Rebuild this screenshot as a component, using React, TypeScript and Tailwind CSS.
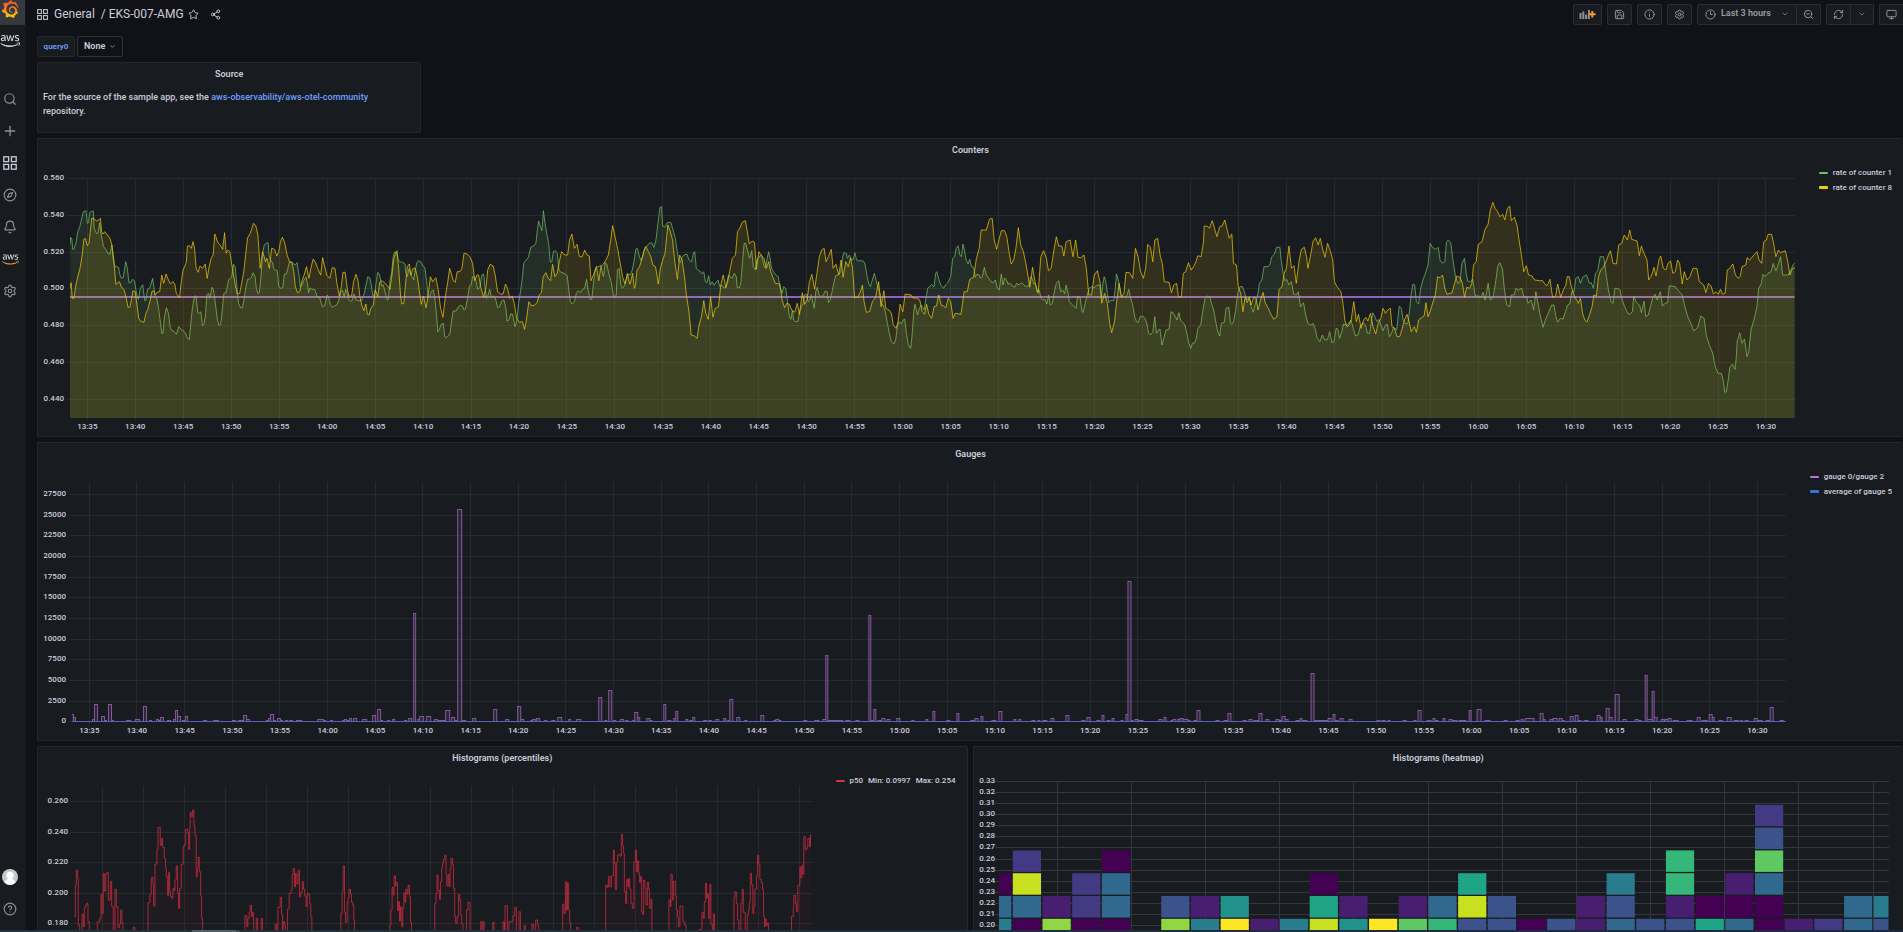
import type { ReactNode } from "react";
import {
  Bell,
  ChevronDown,
  CircleHelp,
  Clock3,
  Compass,
  Info,
  Monitor,
  Plus,
  RefreshCw,
  Save,
  Search,
  Settings,
  Share2,
  Star,
  ZoomOut,
} from "lucide-react";
import { FaAws } from "react-icons/fa";
import { SiGrafana } from "react-icons/si";

/* ---------- data ---------- */

// A recorded stretch of a series: x runs `density` samples per unit from `start`, y is in thirds of a unit.
type Chunk = { start: number; density: number; samples: string };

const PLOT_HEIGHT = 240;

const counter1: Chunk[] = [
  {
    start: -40,
    density: 2.529,
    samples:
      "101,255 103,232 106,238 108,268 111,268 116,250 121,215 126,200 130,180 135,155 142,152 145,190 148,188 151,157 156,154 160,153 162,205 168,220 172,220 176,188 180,225 186,260 192,268 197,280 202,283 207,255 210,295 215,320 224,322 226,340 231,355 236,352 242,305 246,325 250,368 255,368 259,358 264,362 270,405 274,418 279,385 285,374 290,422 293,422 297,388 302,386 306,372 310,355 313,380 317,412 321,418 325,445 330,490 333,520 336,520 340,470 345,443 350,460 354,500 358,512 364,514 370,523 376,500 382,508 388,512 394,522 398,535 403,538 407,485 411,440 416,408 420,408 424,458 428,460 432,455 436,497 440,493 444,460 447,405 451,400 455,415 460,382 464,390 468,425 474,480 478,497 482,493 486,450 490,400 496,398 502,360 506,355 510,350 515,313 519,322 523,378 527,430 532,443 537,443 541,420 546,380 550,358 556,357 560,352 564,338 569,350 572,385 576,400 580,398 584,350 588,280 592,255 597,250 602,248 605,290 608,300 613,308 616,325 620,330 625,332 629,380 634,385 639,383 643,342 648,342 652,325 656,305 662,307 667,312 671,315 675,308 680,345 683,380 688,376 692,362 698,352 702,375 704,398 708,384 713,388 719,388 723,398 726,412 732,410 735,425 740,440 745,437 751,405 755,415 760,435 764,442 770,438 776,434 781,420 786,395 790,390 794,412 798,388 802,402 806,418 810,424 814,422 819,402 824,420 830,422 838,422 845,400 849,378 854,350 859,354 863,375 867,410 871,402 875,368 879,337 884,345 889,378 893,375 899,402 903,420 906,418 910,360 914,340 918,290 922,275 927,280 931,300 936,305 942,307 948,312 950,338 954,350 958,326 963,345 970,360 974,330 978,308 982,302 988,305 993,318 998,322 1003,365 1006,410 1010,412 1014,395 1019,390 1023,410 1027,455 1031,515 1035,508 1040,492 1045,490 1048,530 1052,533 1058,527 1062,518 1066,480 1070,453 1077,453 1083,440 1088,436 1093,438 1097,450 1101,447 1107,410 1111,378 1115,375 1119,350 1124,350 1128,365 1132,388 1137,382 1142,345 1147,342 1150,380 1154,415 1158,405 1162,388 1166,412 1171,408 1176,412 1182,443 1187,440 1192,424 1198,420 1203,445 1206,483 1211,480 1215,462 1220,463 1226,500 1231,480 1235,430 1240,395 1245,350 1248,310 1253,302 1260,292 1266,262 1273,258 1279,250 1283,205 1286,183 1290,200 1294,212 1298,152 1302,190 1307,225 1311,250 1315,306 1319,305 1323,275 1328,272 1333,280 1337,330 1342,337 1350,340 1358,347 1362,390 1366,425 1370,432 1376,425 1381,400 1386,392 1391,398 1397,388 1402,385 1407,358 1411,390 1416,418 1420,418 1424,375 1428,330 1432,320 1438,320 1443,315 1448,345 1450,350 1454,308 1458,312 1463,340 1469,365 1474,400 1478,412 1482,405 1485,330 1489,325 1494,375 1498,385 1504,375 1509,350 1513,342",
  },
  {
    start: 560,
    density: 2.529,
    samples:
      "0,345 5,330 10,300 14,268 18,265 22,285 27,302 32,285 37,262 42,258 48,250 54,248 60,262 65,240 70,190 75,142 79,140 82,198 88,202 92,190 97,187 103,188 108,210 114,235 118,270 123,305 127,308 131,292 136,285 143,282 149,300 155,306 160,278 163,275 167,325 171,330 176,333 181,342 186,335 190,365 194,368 198,347 202,375 207,365 212,376 218,365 222,360 226,380 232,375 238,385 243,375 248,345 253,352 258,354 263,340 268,350 270,382 276,384 280,365 284,300 288,250 292,250 296,270 302,295 307,272 311,320 316,330 320,300 326,290 332,285 338,318 342,325 346,295 350,275 354,300 357,325 362,335 368,345 374,350 378,378 384,400 388,380 393,385 397,420 402,470 406,478 410,450 413,480 418,485 424,484 428,455 433,440 437,430 441,405 446,403 450,425 454,420 458,404 462,430 465,445 469,395 473,382 477,405 482,410 488,405 493,393 498,395 501,428 505,422 510,395 515,368 519,347 526,345 532,335 537,290 540,278 546,280 549,295 554,285 558,298 563,300 568,278 572,300 578,303 584,302 590,304 594,315 598,345 603,372 607,380 612,360 617,340 622,362 627,385 631,398 635,430 639,435 645,455 650,490 655,520 660,545 666,552 671,540 675,500 680,485 685,492 690,480 694,477 698,520 703,555 709,565 713,520 717,450 720,433 726,465 731,445 736,435 743,450 748,410 752,385 758,378 762,374 768,380 772,340 775,335 780,358 785,375 792,385 797,375 803,368 810,350 815,295 820,290 824,265 829,257 833,285 837,290 841,252 845,270 849,300 854,312 858,298 863,320 868,322 872,352 876,343 882,345 886,355 890,350 895,322 900,345 906,355 912,365 918,368 923,360 928,385 933,390 938,342 942,375 946,355 950,357 955,372 960,370 966,378 972,382 977,370 983,375 989,368 995,375 1001,380 1007,378 1012,350 1016,355 1020,372 1024,370 1028,395 1034,390 1038,415 1043,420 1048,418 1053,432 1058,405 1062,435 1067,430 1072,395 1077,370 1083,362 1088,395 1093,390 1098,402 1102,375 1107,400 1110,425 1115,432 1121,438 1127,445 1131,408 1137,412 1142,455 1145,457 1150,430 1154,410 1160,385 1166,380 1172,384 1177,378 1182,375 1187,375 1191,415 1195,370 1198,350 1202,365 1206,400 1210,428 1215,420 1222,422 1226,385 1229,342 1234,360 1240,405 1246,410 1252,412 1256,405 1260,388 1265,415 1270,435 1275,470 1280,485 1284,488 1289,470 1295,468 1301,475 1306,490 1310,520 1316,524 1321,515 1326,470 1330,520 1335,510 1339,507 1344,555 1349,535 1354,510 1362,508 1367,455 1372,458 1377,468 1382,480 1387,458 1391,480 1397,488 1402,495 1407,520 1412,550 1417,565 1421,550 1427,548 1431,535 1435,505 1442,495 1447,455 1453,415 1458,408 1465,410 1469,430 1475,450 1480,485 1485,515 1490,528 1494,490 1502,487 1506,445 1513,442",
  },
  {
    start: 1160,
    density: 2.33,
    samples:
      "0,490 3,493 7,485 12,450 17,400 22,380 28,380 33,400 38,420 43,410 48,440 53,457 58,430 64,400 67,370 73,360 78,320 88,320 92,312 96,290 102,283 107,262 115,262 118,300 123,345 127,362 131,358 136,375 142,365 147,402 153,405 158,395 163,440 170,428 175,465 180,490 187,496 192,490 197,505 202,535 208,545 214,525 220,540 226,538 231,515 236,548 241,545 246,505 250,508 254,535 259,515 263,492 270,495 276,488 280,480 285,500 291,528 297,525 302,500 308,488 314,495 319,520 324,520 328,485 331,458 336,470 341,485 346,478 350,495 355,512 360,497 365,493 370,530 375,520 380,502 387,510 393,438 398,445 402,480 408,492 413,490 417,450 421,400 425,372 429,375 433,425 438,432 443,385 448,360 454,340 460,315 465,250 470,262 478,268 484,262 488,300 493,310 499,305 503,245 507,240 513,248 518,300 524,350 529,370 534,368 539,310 545,295 549,340 553,365 559,365 564,358 570,408 577,408 584,410 588,397 593,420 600,370 605,420 611,415 617,370 622,320 627,308 633,325 638,390 643,435 650,440 654,405 660,405 665,385 670,390 678,385 683,410 690,410 693,430 700,420 706,450 711,395 716,430 721,465 728,502 733,480 740,460 748,435 753,435 758,470 762,487 768,475 774,478 780,455 785,435 790,432 795,395 800,395 804,355 810,350 815,370 820,352 829,345 836,370 840,368 845,385 850,340 855,332 861,290 869,290 875,345 880,390 886,425 891,430 895,385 900,385 907,390 912,420 918,440 925,460 930,463 936,455 939,408 944,425 948,430 953,437 957,458 963,424 967,470 973,465 978,440 984,410 989,403 994,420 1001,395 1006,438 1012,430 1018,428 1022,377 1036,380 1043,392 1052,405 1058,440 1065,470 1072,490 1079,513 1088,502 1095,468 1103,475 1108,525 1115,555 1123,580 1129,620 1135,640 1143,640 1148,665 1151,697 1155,695 1160,650 1163,622 1169,612 1175,628 1178,590 1180,545 1186,518 1191,550 1197,537 1203,590 1207,575 1212,510 1220,475 1226,440 1230,385 1236,372 1240,343 1245,350 1252,340 1259,335 1264,310 1270,333 1276,312 1281,290 1286,345 1299,345 1305,330 1310,315 1315,308",
  },
];

const counter8: Chunk[] = [
  {
    start: -40,
    density: 2.529,
    samples:
      "101,385 104,368 107,415 111,415 116,375 121,350 127,322 132,285 136,238 140,235 145,257 149,250 153,210 156,175 163,177 168,183 174,180 178,175 181,215 184,222 189,215 196,225 202,235 207,255 212,300 215,345 217,373 226,365 231,380 238,390 243,412 248,443 253,440 257,415 260,393 266,395 271,440 275,475 280,484 288,487 293,460 298,448 303,425 308,395 312,392 317,405 321,397 328,395 333,345 338,370 344,342 350,360 355,372 361,365 366,372 370,400 378,413 382,370 387,330 395,308 398,258 403,257 408,265 412,245 416,265 420,325 425,337 430,318 436,325 443,312 448,355 453,320 458,295 463,285 467,222 470,230 475,248 481,255 487,268 492,218 496,280 501,270 505,275 509,305 514,340 519,375 524,402 530,400 536,365 541,330 546,275 550,233 556,222 561,205 565,190 571,198 576,225 580,290 582,325 588,275 592,290 595,305 599,295 605,325 611,265 618,268 624,288 629,275 633,245 638,232 644,248 650,285 656,305 662,307 667,335 671,380 676,398 682,395 687,365 693,345 699,320 705,355 711,320 716,297 722,308 727,325 735,345 740,293 744,315 750,345 758,355 764,323 771,325 776,370 782,408 787,380 791,337 797,337 802,385 806,408 813,408 818,365 824,343 829,360 834,410 840,440 844,452 849,432 853,463 857,465 862,445 868,435 873,390 879,410 884,367 890,362 898,370 904,378 910,388 914,355 920,295 924,280 928,272 932,325 937,410 940,432 945,430 950,365 954,320 959,312 963,345 968,325 974,325 980,355 986,410 989,433 995,408 1001,443 1006,410 1012,350 1018,365 1026,353 1032,390 1038,445 1044,472 1050,410 1056,365 1061,325 1066,345 1070,362 1075,367 1080,335 1087,335 1092,325 1097,280 1105,282 1112,290 1119,310 1124,362 1130,345 1134,345 1140,385 1147,412 1153,380 1157,330 1163,313 1171,318 1176,345 1182,395 1190,402 1196,402 1202,372 1207,385 1213,415 1219,408 1224,430 1230,475 1237,487 1245,485 1250,508 1255,480 1261,425 1268,438 1276,435 1282,428 1287,405 1293,398 1297,350 1304,338 1310,355 1316,362 1321,313 1327,350 1333,340 1338,305 1344,275 1352,285 1359,285 1364,240 1370,222 1376,265 1383,253 1389,290 1396,290 1402,270 1408,285 1414,288 1418,362 1426,340 1432,320 1438,362 1443,320 1450,312 1456,300 1462,285 1468,240 1473,197 1480,235 1486,270 1492,310 1498,350 1504,372 1510,340 1516,372",
  },
  {
    start: 560,
    density: 2.529,
    samples:
      "0,372 6,340 10,385 13,380 17,332 23,320 29,300 34,275 40,260 46,275 52,290 57,315 64,320 71,372 76,325 82,300 88,280 92,230 95,195 100,210 107,240 113,310 119,358 125,285 131,300 137,350 142,405 148,450 154,525 162,528 169,535 174,495 180,470 186,422 191,460 197,478 203,410 209,472 215,445 223,440 229,375 235,345 242,383 247,360 253,325 258,295 266,285 271,215 277,205 283,187 291,182 296,215 301,252 308,243 314,247 319,328 325,275 332,287 338,295 344,325 350,305 355,335 361,353 367,370 378,372 384,420 390,443 396,430 402,433 408,450 416,457 422,430 428,463 435,398 441,433 447,420 453,365 459,343 466,388 472,340 478,290 484,270 490,265 495,305 501,290 508,268 513,325 520,313 527,345 533,300 538,352 545,305 551,320 557,293 562,325 567,413 575,412 582,395 587,375 591,425 597,457 605,455 612,425 620,412 628,365 634,440 641,392 646,445 654,450 660,460 665,495 672,505 677,485 682,433 689,455 695,402 710,405 716,415 722,413 732,420 738,455 744,463 749,433 755,463 762,475 768,440 774,438 780,405 786,435 792,438 798,443 804,415 810,425 816,475 822,460 836,463 844,395 852,395 858,358 868,352 875,295 882,265 887,210 900,210 908,178 915,175 920,240 926,268 932,240 938,212 946,212 952,230 958,280 963,312 969,300 975,265 981,203 987,255 994,275 1000,310 1005,345 1010,382 1017,322 1024,370 1031,400 1038,290 1045,272 1052,295 1057,332 1064,325 1071,270 1077,230 1083,258 1091,258 1096,288 1102,245 1112,240 1119,290 1126,240 1132,292 1139,293 1147,285 1153,325 1159,405 1166,405 1173,345 1181,332 1188,370 1192,430 1199,400 1206,430 1212,490 1217,518 1224,485 1230,420 1236,370 1242,412 1248,400 1253,337 1262,338 1270,355 1277,265 1284,290 1290,335 1297,355 1303,325 1308,253 1315,262 1321,305 1326,240 1333,235 1340,290 1345,310 1350,365 1362,367 1368,398 1374,375 1381,370 1386,412 1393,410 1398,340 1404,335 1411,308 1418,330 1424,320 1430,305 1435,287 1443,290 1449,245 1451,198 1458,198 1464,205 1471,182 1477,205 1483,230 1490,200 1496,198 1503,180 1508,205 1514,235",
  },
  {
    start: 1160,
    density: 2.33,
    samples:
      "3,222 7,310 14,315 18,380 24,400 29,455 34,410 39,428 44,412 48,435 54,412 59,415 64,450 70,420 76,397 81,430 88,445 93,460 101,478 108,470 113,388 120,380 125,340 130,325 136,258 142,325 148,317 153,370 160,300 165,268 172,262 177,290 180,325 186,290 192,245 198,233 204,255 209,235 215,270 220,292 226,250 233,275 238,300 242,365 248,380 257,395 262,430 266,480 271,500 276,495 281,480 287,425 293,485 298,463 304,505 310,480 315,472 320,483 326,460 332,500 338,522 344,490 350,475 355,445 361,460 366,450 372,445 376,500 382,505 388,530 394,530 399,510 405,480 411,463 416,485 421,515 428,500 433,517 438,480 446,472 451,467 455,428 460,470 466,450 473,420 477,405 482,350 488,353 494,345 499,385 504,403 516,398 522,370 527,348 535,353 540,370 545,412 550,382 557,385 562,370 566,315 572,305 577,253 586,245 592,210 600,192 605,150 611,127 616,145 622,155 627,170 634,163 639,180 645,145 650,138 654,182 661,172 667,195 672,240 678,290 683,335 689,317 694,345 702,348 708,360 720,362 727,362 731,370 736,378 740,370 744,358 750,412 757,408 762,372 769,412 775,390 781,375 784,350 789,350 794,382 800,405 810,430 815,415 820,460 825,480 830,487 836,465 842,440 846,405 852,408 857,350 862,330 868,323 876,300 880,285 885,272 891,310 899,312 904,255 911,250 917,225 924,240 930,210 934,238 947,243 952,287 957,258 963,280 970,300 974,360 981,345 986,322 991,348 998,298 1002,288 1008,325 1014,330 1019,310 1025,303 1030,340 1036,335 1041,300 1046,310 1052,372 1057,335 1063,360 1070,350 1077,325 1086,325 1092,365 1102,375 1107,398 1113,370 1119,378 1125,402 1131,395 1136,403 1141,388 1146,403 1152,400 1157,330 1163,325 1170,312 1176,345 1182,355 1187,350 1191,320 1200,315 1203,293 1209,300 1217,288 1226,275 1231,300 1237,310 1242,245 1248,240 1252,223 1260,223 1265,250 1270,290 1276,270 1281,278 1292,272 1297,300 1303,345 1309,325 1315,323",
  },
];

// Each entry is "from-to:level"; everything between entries rests on the floor.
const gaugeRatio: Chunk[] = [
  {
    start: -42,
    density: 2.529,
    samples:
      "106-111:823 111-115:832 157-162:838 162-171:792 180-189:829 189-194:840 198-206:792 206-211:841 245-254:841 266-277:838 288-295:798 301-308:841 319-325:838 325-331:841 331-338:832 349-356:841 362-367:838 367-373:811 373-380:829 385-391:840 392-399:829 440-447:840 463-477:841 512-520:841 528-537:841 541-548:826 548-555:838 597-602:841 602-607:835 607-616:823 616-621:840 625-634:835 634-639:841 645-651:841 656-663:841 673-686:841 728-743:838 743-748:841 759-765:841 790-795:841 795-801:838 801-807:840 807-813:835 819-826:835 842-850:838 866-874:826 878-886:808 886-891:841 903-909:841 916-922:838 946-952:841 956-965:835 969-975:520 981-986:838 986-995:829 1004-1013:829 1024-1031:838 1034-1042:841 1046-1052:841 1052-1061:811 1065-1073:832 1073-1082:840 1082-1092:208 1092-1101:841 1120-1127:835 1173-1180:808 1203-1210:838 1234-1241:799 1241-1247:838 1265-1270:841 1270-1278:838 1282-1289:835 1300-1306:841 1318-1327:841 1335-1344:832 1361-1367:838 1383-1391:838 1439-1446:772 1452-1458:841 1462-1471:751 1475-1480:841 1493-1501:838 1505-1511:841 1523-1530:841 1530-1536:817 1536-1542:832",
  },
  {
    start: 568,
    density: 2.6133,
    samples:
      "16-25:835 25-30:841 61-67:793 73-80:841 87-92:835 92-98:814 118-125:838 129-136:841 136-143:832 167-174:841 179-186:841 196-205:838 217-224:835 228-235:841 235-242:778 253-260:832 272-279:841 316-323:826 348-353:841 353-361:838 361-367:841 428-435:841 457-466:841 478-484:838 484-490:646 490-497:841 501-516:841 520-530:841 538-547:841 564-571:841 597-603:526 603-609:841 609-616:808 620-629:841 632-639:835 645-652:838 670-678:835 709-715:841 746-752:838 764-770:814 800-809:841 826-833:820 863-875:841 875-882:835 889-896:829 919-928:841 938-945:814 976-982:838 988-995:838 1024-1031:841 1038-1044:841 1052-1062:841 1074-1081:835 1111-1120:826 1154-1162:841 1168-1175:832 1193-1200:841 1205-1212:826 1218-1226:841 1231-1238:835 1256-1262:841 1268-1274:823 1274-1282:424 1282-1287:841 1292-1299:838 1299-1313:841 1355-1363:838 1367-1374:832 1386-1392:841 1392-1400:838 1404-1411:838 1411-1418:835 1418-1430:838 1430-1435:841 1447-1453:841 1453-1462:811 1504-1512:841 1525-1532:841 1535-1543:820",
  },
  {
    start: 1158,
    density: 2.33,
    samples:
      "28-35:841 43-50:838 54-63:841 66-74:820 82-89:838 105-112:838 112-117:841 121-127:829 127-133:838 153-161:841 161-167:835 170-178:841 188-195:700 198-224:841 227-235:835 238-244:823 244-250:841 254-262:835 276-283:838 341-349:841 354-360:841 366-372:841 403-410:841 427-432:841 438-444:811 459-466:841 471-477:835 477-484:841 494-500:835 510-516:838 516-528:841 532-549:841 555-560:811 575-584:808 593-605:841 637-644:841 665-672:841 676-682:838 687-706:835 720-728:820 728-733:838 744-752:838 752-761:835 765-773:835 773-778:841 792-799:829 803-810:826 810-816:841 824-832:841 853-860:826 860-866:832 876-882:805 882-889:832 897-905:763 914-921:838 942-949:838 949-956:841 965-971:706 971-981:838 981-987:754 987-994:832 1003-1010:838 1013-1020:838 1020-1026:835 1030-1043:841 1064-1075:841 1086-1094:832 1098-1110:841 1114-1122:823 1122-1127:832 1138-1145:841 1158-1166:832 1174-1182:841 1186-1192:841 1198-1205:841 1219-1226:835 1230-1238:841 1247-1256:841 1257-1264:802 1280-1287:841",
  },
];

const p50: Chunk[] = [
  {
    start: -74,
    density: 3,
    samples:
      "223,530 226,436 229,391 233,415 235,555 239,590 246,522 250,560 253,502 257,495 260,490 264,545 268,590 292,545 299,535 303,463 306,520 310,400 313,453 317,403 321,397 325,480 331,424 335,500 340,590 345,448 349,500 354,563 358,553 362,510 366,548 369,590 400,562 405,590 444,488 450,464 454,412 459,435 461,498 465,372 471,328 474,262 481,316 485,295 488,322 493,355 497,385 499,410 503,466 506,397 509,455 512,470 516,475 519,445 522,452 525,420 529,378 533,460 536,505 539,445 544,373 550,318 555,310 557,268 563,278 566,328 569,262 571,217 574,230 578,210 582,258 585,285 589,410 592,385 595,351 598,395 602,468 605,535 608,590 735,527 741,560 744,535 748,517 751,496 755,530 758,517 761,590 769,535 773,590 784,535 788,590 826,553 830,590 834,502 839,502 841,472 845,522 848,590 850,545 855,558 857,590 863,507 868,460 874,448 877,403 880,385 884,440 887,400 891,432 895,391 899,470 903,458 907,425 911,448 915,468 919,500 922,460 927,465 930,492 933,532 936,590 1023,520 1027,455 1030,378 1034,517 1037,547 1042,487 1045,472 1048,448 1052,462 1055,487 1059,495 1062,540 1064,590 1170,555 1173,510 1177,442 1180,465 1183,408 1187,438 1189,427 1193,512 1196,485 1199,543 1202,500 1206,560 1209,505 1212,460 1216,487 1218,448 1222,462 1225,436 1229,470 1232,547 1235,590 1303,570 1305,490 1309,460 1312,405 1315,450 1319,478 1322,425 1326,385 1328,370 1331,358 1335,346 1339,403 1341,437 1345,403 1348,440 1351,385 1354,355 1358,373 1361,445 1365,530 1368,550 1372,530 1376,463 1380,480 1383,525 1386,552 1390,590 1400,510 1405,487 1411,590",
  },
  {
    start: 406,
    density: 3,
    samples:
      "3,545 7,590 10,545 13,590 39,547 43,590 70,545 74,590 76,497 83,590 88,545 100,527 105,502 110,590 118,515 122,590 133,556 137,590 157,553 161,590 168,540 174,555 177,590 249,492 253,520 257,425 261,510 263,430 267,510 270,547 273,590 291,562 296,590 378,435 383,443 386,410 391,440 395,408 401,330 404,370 407,448 411,367 414,345 418,343 423,349 425,283 429,318 432,340 434,455 438,490 441,418 445,440 447,415 450,447 454,490 458,505 463,365 467,330 471,395 474,363 477,400 480,427 483,410 486,515 489,523 492,420 496,445 499,495 503,427 507,447 510,505 514,478 517,590 568,480 572,500 574,403 578,480 581,424 587,468 590,510 594,533 597,560 601,498 610,545 616,557 620,590 658,568 667,517 671,535 674,485 678,430 681,475 683,462 687,535 691,433 694,553 698,570 701,522 705,590 763,472 766,455 770,490 774,540 778,570 784,490 788,448 791,517 797,590 803,525 806,510 809,487 812,400 816,433 820,520 823,500 826,447 831,408 834,346 838,373 841,418 845,428 849,448 852,530 855,560 857,537 860,557 863,550 867,590 936,530 941,505 943,466 948,490 951,515 955,436 961,382 964,413 967,376 970,403 973,290 977,328 983,320 985,295 990,320 993,285 996,285",
  },
];

const VIRIDIS: Record<string, string> = {
  "0": "#440154",
  "1": "#481f70",
  "2": "#443983",
  "3": "#3b528b",
  "4": "#31688e",
  "5": "#287c8e",
  "6": "#21918c",
  "7": "#20a486",
  "8": "#35b779",
  "9": "#5ec962",
  a: "#90d743",
  b: "#c8e020",
  c: "#fde725",
};

// One string per time bucket, listed from the lowest visible row upwards.
const heatColumns = [
  "540", "04b2", "a1", "022", "0440", "", "a3", "51", "c6", "1", "5", "b70", "61", "c", "91", "84",
  "3b7", "33", "0", "3", "11", "435", "3", "3188", "70", "401", "004932", "1", "2", "44", "35",
];

/* ---------- path helpers ---------- */

type Point = [number, number];

function linePoints(chunks: Chunk[], yShift: number): Point[] {
  return chunks.flatMap(({ start, density, samples }) =>
    samples.split(" ").map((pair): Point => {
      const [x, y] = pair.split(",").map(Number);
      return [start + x / density, y / 3 - yShift];
    }),
  );
}

function stepPoints(points: Point[]): Point[] {
  return points.flatMap(([x, y], i): Point[] => (i === 0 ? [[x, y]] : [[x, points[i - 1][1]], [x, y]]));
}

function barPoints(chunks: Chunk[], yShift: number, floor: number): Point[] {
  return chunks.flatMap(({ start, density, samples }) =>
    samples.split(" ").flatMap((entry): Point[] => {
      const [from, to, level] = entry.split(/[-:]/).map(Number);
      const left = Math.floor(start + from / density) + 0.5;
      const right = Math.floor(start + to / density) + 0.5;
      const y = Math.floor(level / 3 - yShift) + 0.5;
      return [[left, floor], [left, y], [right, y], [right, floor]];
    }),
  );
}

const toPath = (points: Point[]) =>
  points.map(([x, y], i) => `${i ? "L" : "M"}${x.toFixed(1)} ${y.toFixed(1)}`).join("");

function toArea(points: Point[], floor: number) {
  const first = points[0][0];
  const last = points[points.length - 1][0];
  return `${toPath(points)}L${last} ${floor}L${first} ${floor}Z`;
}

function timeLabel(i: number) {
  const minutes = 13 * 60 + 35 + i * 5;
  return `${Math.floor(minutes / 60)}:${String(minutes % 60).padStart(2, "0")}`;
}

/* ---------- chart parts ---------- */

type Tick = { at: number; label: string };

type PlotProps = {
  span: number;
  height?: number;
  axisClass: string;
  axisWidth: number;
  xTicks: Tick[];
  yTicks: Tick[];
  gridColor?: string;
  tickGap?: number;
  name: string;
  children: ReactNode;
};

function Plot({
  span,
  height = PLOT_HEIGHT,
  axisClass,
  axisWidth,
  xTicks,
  yTicks,
  gridColor = "#262a2d",
  tickGap = 6,
  name,
  children,
}: PlotProps) {
  return (
    <div className="flex min-w-0 flex-1">
      <svg className={`h-[258px] shrink-0 overflow-visible ${axisClass}`} aria-hidden="true">
        {yTicks.map((t) => (
          <text
            key={t.label}
            x={axisWidth - tickGap}
            y={t.at + 1.5}
            textAnchor="end"
            className="fill-[#ccccdc] text-[8px] font-medium"
          >
            {t.label}
          </text>
        ))}
      </svg>
      <svg className="h-[258px] min-w-0 flex-1 overflow-visible" role="img" aria-label={name}>
        <g stroke={gridColor} shapeRendering="crispEdges">
          {xTicks.map((t) => (
            <line key={t.at} x1={`${(t.at / span) * 100}%`} x2={`${(t.at / span) * 100}%`} y1={0} y2={height + 2} />
          ))}
          {yTicks.map((t) => (
            <line key={t.at} x1={-3} x2="100%" y1={t.at} y2={t.at} />
          ))}
        </g>
        <svg width="100%" height={height} viewBox={`0 0 ${span} ${height}`} preserveAspectRatio="none">
          {children}
        </svg>
        {xTicks
          .filter((t) => t.label)
          .map((t) => (
            <text
              key={t.at}
              x={`${(t.at / span) * 100}%`}
              y={251}
              textAnchor="middle"
              className="fill-[#ccccdc] text-[8px] font-medium"
            >
              {t.label}
            </text>
          ))}
      </svg>
    </div>
  );
}

function Panel({ title, className = "", children }: { title: string; className?: string; children: ReactNode }) {
  return (
    <section className={`flex min-w-0 flex-col rounded-xs border border-[#24272c] bg-[#181b1f] ${className}`}>
      <h2 className="h-[22px] shrink-0 text-center text-[9px] leading-[22px] font-semibold">{title}</h2>
      {children}
    </section>
  );
}

function Legend({ items }: { items: { swatch: string; text: string[] }[] }) {
  return (
    <ul className="ml-6 shrink-0 pt-1 pr-[11px] text-[8px] font-medium">
      {items.map((item) => (
        <li key={item.text[0]} className="flex h-[15px] items-center gap-[5px] whitespace-nowrap">
          <span className={`w-[9px] rounded-[1px] ${item.swatch}`} />
          {item.text.map((t) => (
            <span key={t}>{t}</span>
          ))}
        </li>
      ))}
    </ul>
  );
}

/* ---------- panels ---------- */

const g1 = linePoints(counter1, 18);
const g8 = linePoints(counter8, 18);
const ratio = barPoints(gaugeRatio, 42, 239.5);
const p50Steps = stepPoints(linePoints(p50, 46));

const counterX = Array.from({ length: 36 }, (_, i) => ({ at: 17.3 + i * 47.94, label: timeLabel(i) }));
const counterY = Array.from({ length: 7 }, (_, i) => ({
  at: Math.round(i * 36.83) + 0.5,
  label: (0.56 - i * 0.02).toFixed(3),
}));
const gaugeX = Array.from({ length: 36 }, (_, i) => ({ at: 17.3 + i * 47.64, label: timeLabel(i) }));
const gaugeY = Array.from({ length: 12 }, (_, i) => ({
  at: Math.round(12 + i * 20.67) + 0.5,
  label: String(27500 - i * 2500),
}));
const percentileX = Array.from({ length: 18 }, (_, i) => ({ at: 28.5 + i * 41, label: "" }));
const percentileY = Array.from({ length: 5 }, (_, i) => ({
  at: Math.round(15 + i * 30.6) + 0.5,
  label: (0.26 - i * 0.02).toFixed(3),
}));
const heatX = Array.from({ length: 12 }, (_, i) => ({ at: 59.3 + i * 74.12, label: "" }));
const heatY = Array.from({ length: 14 }, (_, i) => ({
  at: Math.round(i * 11.08) + 0.5,
  label: (0.33 - i * 0.01).toFixed(2),
}));

function CountersPanel() {
  return (
    <Panel title="Counters" className="h-[299px] border-r-0">
      <div className="flex">
        <div className="flex min-w-0 flex-1 pt-[17px]">
          <Plot name="Counter rates" span={1724} axisClass="w-8" axisWidth={32} xTicks={counterX} yTicks={counterY}>
            <line x1={0} x2={1724} y1={119} y2={119} stroke="#9560bd" strokeWidth={2} />
            <path d={toArea(g1, PLOT_HEIGHT)} fill="#73bf69" fillOpacity={0.12} />
            <path d={toPath(g1)} fill="none" stroke="#73bf69" strokeOpacity={0.7} vectorEffect="non-scaling-stroke" />
            <path d={toArea(g8, PLOT_HEIGHT)} fill="#f2cc0c" fillOpacity={0.13} />
            <path d={toPath(g8)} fill="none" stroke="#f2cc0c" strokeOpacity={0.7} vectorEffect="non-scaling-stroke" />
          </Plot>
        </div>
        <Legend
          items={[
            { swatch: "h-[2px] bg-[#73bf69]", text: ["rate of counter 1"] },
            { swatch: "h-[3px] bg-[#f2cc0c]", text: ["rate of counter 8"] },
          ]}
        />
      </div>
    </Panel>
  );
}

function GaugesPanel() {
  return (
    <Panel title="Gauges" className="h-[299px] border-r-0">
      <div className="flex">
        <div className="flex min-w-0 flex-1 pt-[17px]">
          <Plot name="Gauges" span={1713} axisClass="w-[34px]" axisWidth={34} xTicks={gaugeX} yTicks={gaugeY}>
            <path d={toPath(ratio)} fill="#b877d9" fillOpacity={0.12} stroke="#b877d9" strokeOpacity={0.65} />
            <line x1={0} x2={1713} y1={239.5} y2={239.5} stroke="#5563bd" />
          </Plot>
        </div>
        <Legend
          items={[
            { swatch: "h-[2px] bg-[#b877d9]", text: ["gauge 0/gauge 2"] },
            { swatch: "h-[3px] bg-[#3274d9]", text: ["average of gauge 5"] },
          ]}
        />
      </div>
    </Panel>
  );
}

function PercentilesPanel() {
  return (
    <Panel title="Histograms (percentiles)" className="h-[299px]">
      <div className="flex">
        <div className="flex min-w-0 flex-1 pt-[17px]">
          <Plot
            name="Percentiles"
            span={738}
            axisClass="w-9"
            axisWidth={36}
            xTicks={percentileX}
            yTicks={percentileY}
          >
            <path d={toArea(p50Steps, PLOT_HEIGHT)} fill="#e02f44" fillOpacity={0.04} />
            <path d={toPath(p50Steps)} fill="none" stroke="#e02f44" strokeOpacity={0.7} vectorEffect="non-scaling-stroke" />
          </Plot>
        </div>
        <Legend items={[{ swatch: "h-[2px] bg-[#e02f44]", text: ["p50", "Min: 0.0997", "Max: 0.254"] }]} />
      </div>
    </Panel>
  );
}

function HeatmapPanel() {
  return (
    <Panel title="Histograms (heatmap)" className="h-[299px] border-r-0">
      <div className="flex pt-3 pr-[15px]">
        <Plot
          name="Heatmap"
          span={890}
          axisClass="w-6"
          axisWidth={24}
          tickGap={3}
          gridColor="#34363b"
          xTicks={heatX}
          yTicks={heatY}
        >
          {heatColumns.map((column, i) =>
            column
              .split("")
              .map((level, row) => (
                <rect
                  key={`${i}-${row}`}
                  x={i === 0 ? 1 : 14.8 + (i - 1) * 29.67}
                  y={137.8 - row * 22.8}
                  width={i === 0 ? 12.3 : 28.2}
                  height={21.5}
                  fill={VIRIDIS[level]}
                />
              )),
          )}
        </Plot>
      </div>
    </Panel>
  );
}

/* ---------- page chrome ---------- */

function AppsIcon({ className }: { className: string }) {
  return (
    <svg viewBox="0 0 14 14" className={className} fill="none" stroke="currentColor" strokeWidth={1.3} aria-hidden="true">
      <rect x="0.8" y="0.8" width="4.8" height="4.8" />
      <rect x="8.4" y="0.8" width="4.8" height="4.8" />
      <rect x="0.8" y="8.4" width="4.8" height="4.8" />
      <rect x="8.4" y="8.4" width="4.8" height="4.8" />
    </svg>
  );
}

function AddPanelIcon() {
  return (
    <svg viewBox="0 0 17 11" className="h-[11px] w-[17px]" aria-hidden="true">
      <g fill="#8e8f98">
        <rect x="0.5" y="4" width="2" height="6" />
        <rect x="3.3" y="2.5" width="2" height="7.5" />
        <rect x="6.1" y="5.5" width="2" height="4.5" />
        <rect x="8.9" y="1" width="2" height="9" />
      </g>
      <path d="M13.3 2v6.4M10.2 5.2h6.4" stroke="#ff9830" strokeWidth="2" />
    </svg>
  );
}

function SideLink({ label, children }: { label: string; children: ReactNode }) {
  return (
    <a href="#" aria-label={label} className="flex h-8 w-5 items-center justify-center">
      {children}
    </a>
  );
}

function Sidebar() {
  return (
    <nav className="flex w-[26px] shrink-0 flex-col border-r border-[#15171b] bg-[#181b1f] text-[#8e8f98]">
      <svg className="absolute size-0" aria-hidden="true">
        <defs>
          <linearGradient id="flame" x1="0" y1="1" x2="0" y2="0">
            <stop offset="0" stopColor="#fcd20c" />
            <stop offset="0.45" stopColor="#f68b1f" />
            <stop offset="1" stopColor="#ef5030" />
          </linearGradient>
        </defs>
      </svg>
      <a href="#" aria-label="Home" className="flex h-[25px] items-start bg-[#35383d] pl-px">
        <SiGrafana className="size-[18px]" fill="url(#flame)" />
      </a>
      <a href="#" aria-label="AWS" className="flex h-[31px] w-5 items-center justify-center text-[#dcdde2]">
        <FaAws className="size-5 shrink-0" />
      </a>
      <div className="flex flex-col pt-[27px]">
        <SideLink label="Search">
          <Search className="size-[14px]" strokeWidth={2} />
        </SideLink>
        <SideLink label="Create">
          <Plus className="size-4" strokeWidth={2} />
        </SideLink>
        <SideLink label="Dashboards">
          <AppsIcon className="size-[14px] text-[#ccccdc]" />
        </SideLink>
        <SideLink label="Explore">
          <Compass className="size-[14px]" strokeWidth={2} />
        </SideLink>
        <SideLink label="Alerting">
          <Bell className="size-[14px]" strokeWidth={2} />
        </SideLink>
        <SideLink label="AWS data sources">
          <span className="grid">
            <FaAws className="col-start-1 row-start-1 size-[17px] text-[#dcdde2] [clip-path:inset(0_0_38%_0)]" />
            <FaAws className="col-start-1 row-start-1 size-[17px] text-[#f29a2e] [clip-path:inset(62%_0_0_0)]" />
          </span>
        </SideLink>
        <SideLink label="Configuration">
          <Settings className="size-[14px]" strokeWidth={2} />
        </SideLink>
      </div>
      <div className="mt-auto flex flex-col pb-[5px]">
        <SideLink label="Profile">
          <svg viewBox="0 0 16 16" className="size-4" aria-hidden="true">
            <circle cx="8" cy="8" r="8" fill="#c6c8cb" />
            <circle cx="8" cy="6.3" r="3.6" fill="#fff" />
            <path d="M2.6 13.4c.8-2.600 3-3.600 5.400-3.600s4.600 1 5.400 3.600A8 8 0 0 1 8 16a8 8 0 0 1-5.400-2.600z" fill="#fff" />
          </svg>
        </SideLink>
        <SideLink label="Help">
          <CircleHelp className="size-[14px]" strokeWidth={2} />
        </SideLink>
      </div>
    </nav>
  );
}

function ToolButton({ label, className = "w-[25px] rounded-xs", children }: { label: string; className?: string; children: ReactNode }) {
  return (
    <button
      type="button"
      aria-label={label}
      className={`flex h-[21px] items-center justify-center border border-[#2a2d32] bg-[#181b1f] ${className}`}
    >
      {children}
    </button>
  );
}

function Toolbar() {
  return (
    <header className="flex h-7 items-center">
      <h1 className="flex items-center text-[12px] text-[#ccccdc]">
        <AppsIcon className="mr-[6px] size-[11px]" />
        <a href="#">General</a>
        <span className="ml-[6px] mr-[3px]">/</span>
        <a href="#">EKS-007-AMG</a>
      </h1>
      <button type="button" aria-label="Mark as favorite" className="ml-1 text-[#ccccdc]">
        <Star className="size-[11px]" strokeWidth={2} />
      </button>
      <button type="button" aria-label="Share dashboard" className="ml-[11px] text-[#ccccdc]">
        <Share2 className="size-[11px]" strokeWidth={2} />
      </button>
      <div className="ml-auto flex gap-[5px] text-[#9a9ba5]">
        <ToolButton label="Add panel" className="w-[29px] rounded-xs">
          <AddPanelIcon />
        </ToolButton>
        <ToolButton label="Save dashboard">
          <Save className="size-[11px]" />
        </ToolButton>
        <ToolButton label="Dashboard insights">
          <Info className="size-[11px]" />
        </ToolButton>
        <ToolButton label="Dashboard settings">
          <Settings className="size-[11px]" />
        </ToolButton>
        <div className="flex">
          <button
            type="button"
            className="flex h-[21px] w-[100px] items-center rounded-l-xs border border-[#2a2d32] bg-[#181b1f] pr-[7px] pl-[7px] text-[9px] font-semibold whitespace-nowrap"
          >
            <Clock3 className="mr-[5px] size-[11px]" />
            Last 3 hours
            <ChevronDown className="ml-auto size-2" />
          </button>
          <ToolButton label="Time range zoom out" className="w-6 rounded-r-xs border-l-0">
            <ZoomOut className="size-[11px]" />
          </ToolButton>
        </div>
        <div className="flex">
          <ToolButton label="Refresh dashboard" className="w-[25px] rounded-l-xs">
            <RefreshCw className="size-[11px]" />
          </ToolButton>
          <ToolButton label="Refresh interval" className="w-[23px] rounded-r-xs border-l-0">
            <ChevronDown className="size-2" />
          </ToolButton>
        </div>
        <ToolButton label="Cycle view mode" className="w-6 rounded-l-xs border-r-0">
          <Monitor className="size-[11px]" />
        </ToolButton>
      </div>
    </header>
  );
}

export default function App() {
  return (
    <div className="flex h-screen flex-col overflow-hidden bg-[#111217] font-[Roboto,sans-serif] text-[#ccccdc]">
      <div className="flex min-h-0 flex-1">
        <Sidebar />
        <main className="min-w-0 flex-1 overflow-hidden pl-[11px]">
          <Toolbar />
          <div className="mt-2 flex gap-[2px]">
            <label
              htmlFor="query0"
              className="flex h-[21px] w-[38px] items-center justify-center rounded-xs border border-[#24272c] bg-[#181b1f] text-[8px] font-semibold text-[#6e9fff]"
            >
              query0
            </label>
            <div className="relative flex items-center">
              <select
                id="query0"
                className="h-[21px] w-[46px] appearance-none rounded-xs border border-[#2f3237] bg-[#111217] pl-[6px] text-[9px] font-semibold"
              >
                <option>None</option>
              </select>
              <ChevronDown className="pointer-events-none absolute right-[7px] size-[7px]" />
            </div>
          </div>
          <div className="mt-[5px] flex flex-col gap-[5px]">
            <Panel title="Source" className="h-[71px] w-[20.6%]">
              <p className="mt-[5px] px-[5px] text-[9px] leading-[14px] font-medium">
                For the source of the sample app, see the{" "}
                <a href="#" className="text-[#6e9fff]">
                  aws-observability/aws-otel-community
                </a>{" "}
                <br />
                repository.
              </p>
            </Panel>
            <CountersPanel />
            <GaugesPanel />
            <div className="grid grid-cols-2 gap-[5px]">
              <PercentilesPanel />
              <HeatmapPanel />
            </div>
          </div>
        </main>
      </div>
      <div className="flex h-[2px] shrink-0 bg-linear-to-r from-[#20343b] to-[#1b2a40]">
        <span className="ml-[192px] w-[44px] bg-[#4f5f66]" />
        <span className="w-1 bg-[#36464d]" />
      </div>
    </div>
  );
}
